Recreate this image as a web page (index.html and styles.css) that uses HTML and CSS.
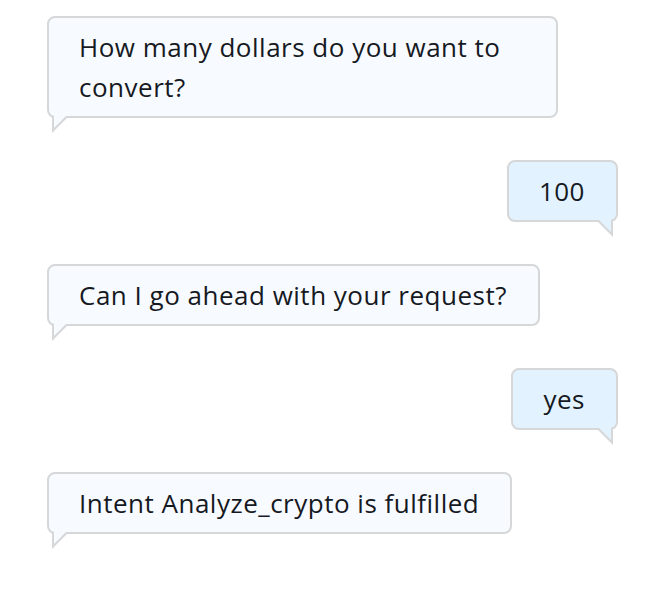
FILE: index.html
```html
<!DOCTYPE html>
<html>
<head>
<meta charset="utf-8">
<link rel="stylesheet" href="styles.css">
</head>
<body>
<div class="chat">
  <div class="msg bot">How many dollars do you want to convert?</div>
  <div class="msg user">100</div>
  <div class="msg bot">Can I go ahead with your request?</div>
  <div class="msg user">yes</div>
  <div class="msg bot">Intent Analyze_crypto is fulfilled</div>
</div>
</body>
</html>
```
FILE: styles.css
```css
html, body {
  margin: 0;
  padding: 0;
  background: #ffffff;
}
.chat {
  display: flex;
  flex-direction: column;
  gap: 42px;
  padding: 16px 38px 40px 47px;
  font-family: "Open Sans", "Liberation Sans", sans-serif;
  font-size: 26px;
  letter-spacing: 0.5px;
  line-height: 40px;
  color: #16191f;
}
.msg {
  position: relative;
  border: 2px solid #d5d7d9;
  border-radius: 8px;
  padding: 9px 31px 9px 30px;
  max-width: 446px;
}
.bot {
  align-self: flex-start;
  background: #f7fbff;
}
.user {
  align-self: flex-end;
  background: #e2f2fe;
}
.msg::before,
.msg::after {
  content: "";
  position: absolute;
  width: 0;
  height: 0;
  top: 100%;
}
.bot::before {
  left: 3px;
  border-left: 17px solid #d5d7d9;
  border-bottom: 17px solid transparent;
}
.bot::after {
  left: 5px;
  border-left: 12px solid #f7fbff;
  border-bottom: 12px solid transparent;
}
.user::before {
  right: 3px;
  border-right: 17px solid #d5d7d9;
  border-bottom: 17px solid transparent;
}
.user::after {
  right: 5px;
  border-right: 12px solid #e2f2fe;
  border-bottom: 12px solid transparent;
}
```
